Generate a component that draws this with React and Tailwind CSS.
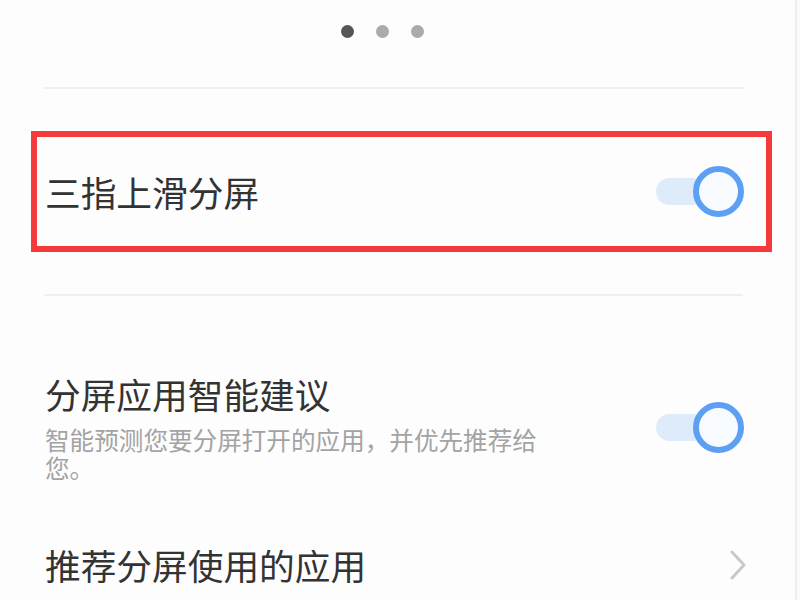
import React from 'react'

function Toggle() {
  return (
    <div className="relative w-[88px] h-[51px] shrink-0">
      <div className="absolute left-0 top-[12px] w-[50px] h-[27px] rounded-full bg-[#deebfb]" />
      <div className="absolute right-0 top-0 w-[51px] h-[51px] rounded-full border-[6px] border-[#5da0f3] bg-[#f7faff]" />
    </div>
  )
}

export default function App() {
  return (
    <div className="w-[800px] h-[600px] bg-[#fdfdfd] flex overflow-hidden font-['Noto_Sans_CJK_SC',sans-serif] text-[#333333]">
      <div className="flex-1 flex flex-col">
        {/* page dots */}
        <div className="h-[62px] flex items-center gap-[22px] pl-[341px]">
          <span className="w-[13px] h-[13px] rounded-full bg-[#555555]" />
          <span className="w-[13px] h-[13px] rounded-full bg-[#aaaaaa]" />
          <span className="w-[13px] h-[13px] rounded-full bg-[#aaaaaa]" />
        </div>
        <div className="mt-[25px] ml-[44px] mr-[52px] h-[2px] bg-[#efefef]" />

        {/* highlighted row */}
        <div className="mt-[42px] ml-[31px] w-[741px] h-[121px] border-[6px] border-[#f43a3a] flex items-center justify-between pl-[8px] pr-[22px]">
          <span className="text-[35.7px] leading-[40px]">三指上滑分屏</span>
          <Toggle />
        </div>
        <div className="mt-[42px] ml-[44px] mr-[52px] h-[2px] bg-[#efefef]" />

        {/* smart suggestion */}
        <div className="mt-[78px] ml-[45px] mr-[51px] flex items-center justify-between">
          <div className="flex flex-col">
            <span className="text-[35.7px] leading-[40px]">分屏应用智能建议</span>
            <p className="mt-[11px] w-[510px] text-[24.6px] leading-[28px] text-[#a3a3a3]">
              智能预测您要分屏打开的应用，并优先推荐给您。
            </p>
          </div>
          <Toggle />
        </div>

        {/* recommended apps */}
        <div className="mt-[64px] ml-[45px] mr-[48px] flex items-center justify-between">
          <span className="text-[35.7px] leading-[40px]">推荐分屏使用的应用</span>
          <svg width="18" height="30" viewBox="0 0 18 30" fill="none">
            <polyline points="3,2 15,15 3,28" stroke="#c8c8c8" strokeWidth="3" strokeLinecap="round" strokeLinejoin="round" />
          </svg>
        </div>
      </div>
      <div className="w-[5px] h-full border-l-[2px] border-[#eeeeee] bg-[#fafafa]" />
    </div>
  )
}
